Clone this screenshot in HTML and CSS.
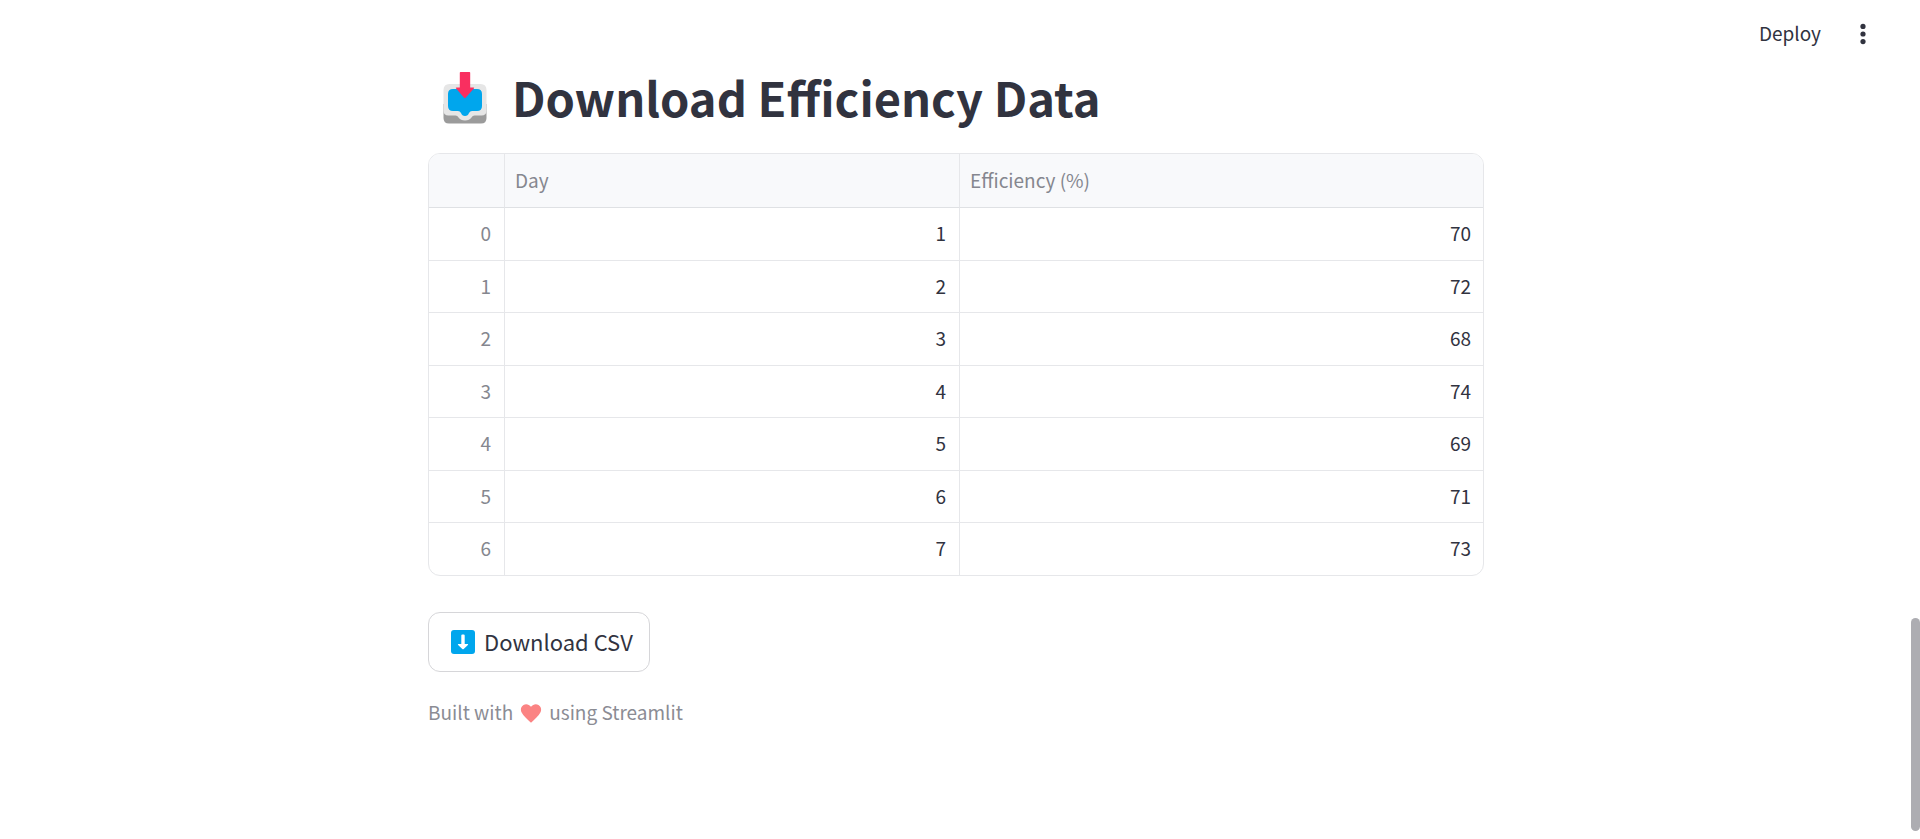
FILE: index.html
```html
<!DOCTYPE html>
<html lang="en">
<head>
<meta charset="utf-8">
<title>Download Efficiency Data</title>
<link rel="stylesheet" href="styles.css">
</head>
<body>
<header class="toolbar">
  <button class="deploy" type="button">Deploy</button>
  <button class="menu" type="button" aria-label="Main menu">
    <svg width="24" height="24" viewBox="0 0 24 24" aria-hidden="true"><circle cx="12" cy="4.400" r="2.600"/><circle cx="12" cy="12" r="2.600"/><circle cx="12" cy="19.600" r="2.600"/></svg>
  </button>
</header>
<main class="content">
  <h1 class="title">
    <svg class="inbox" width="44" height="52" viewBox="0 0 44 52" aria-hidden="true">
      <path fill="#9b9b9b" d="M.5 32h43v14q0 5.500-5.500 5.500H6q-5.500 0-5.500-5.500z"/>
      <path fill="#e6e6e6" d="M6.500 12h31q6 0 6 6v20.500q0 5-5 5h-7q-2 0-3 2-2 3-6.500 3t-6.500-3q-1-2-3-2h-7q-5 0-5-5V18q0-6 6-6z"/>
      <path fill="#00a6ed" d="M10 17h24q5 0 5 5v12q0 5-5 5h-5q-2 0-3 2-1 3-4 3t-4-3q-1-2-3-2h-5q-5 0-5-5V22q0-5 5-5z"/>
      <path fill="#f92f60" d="M17.500 0h9q.7 0 .7.700V15.500h3.200q1.300 0 .5 1L22.600 25.800q-.8.700-1.500 0L13.100 16.500q-.8-1 .5-1h3.200V.7q0-.7.7-.7z"/>
    </svg>
    <span>Download Efficiency Data</span>
  </h1>
  <div class="frame">
    <table class="grid">
      <colgroup><col class="col-index"><col class="col-day"><col></colgroup>
      <thead><tr><td></td><th scope="col">Day</th><th scope="col">Efficiency (%)</th></tr></thead>
      <tbody>
        <tr><th scope="row">0</th><td>1</td><td>70</td></tr>
        <tr><th scope="row">1</th><td>2</td><td>72</td></tr>
        <tr><th scope="row">2</th><td>3</td><td>68</td></tr>
        <tr><th scope="row">3</th><td>4</td><td>74</td></tr>
        <tr><th scope="row">4</th><td>5</td><td>69</td></tr>
        <tr><th scope="row">5</th><td>6</td><td>71</td></tr>
        <tr><th scope="row">6</th><td>7</td><td>73</td></tr>
      </tbody>
    </table>
  </div>
  <button class="download" type="button">
    <svg width="24" height="24" viewBox="0 0 24 24" aria-hidden="true"><rect width="24" height="24" rx="3" fill="#00a6ed"/><path fill="#fff" d="M10.300 5.500q0-1 1-1h1.400q1 0 1 1V14h2.800q1.200 0 .4 1l-4.200 4q-.7.700-1.400 0l-4.200-4q-.8-1 .4-1h2.800z"/></svg>
    <span>Download CSV</span>
  </button>
  <p class="caption">
    <span>Built with</span>
    <svg width="22" height="19" viewBox="0 0 22 19" role="img" aria-label="love"><path fill="#fb8383" d="M11 2.800C13 .2 16-.4 18.500 1c2.500 1.500 3.300 4.600 2 7.300C18.700 12 14.500 15.500 11.600 18.200q-.6.500-1.200 0C7.500 15.500 3.300 12 1.500 8.300.2 5.600 1 2.500 3.500 1 6-.4 9 .2 11 2.800z"/></svg>
    <span>using Streamlit</span>
  </p>
</main>
<div class="scroll-thumb"></div>
</body>
</html>
```
FILE: styles.css
```css
* { box-sizing: border-box; }

body {
  margin: 0;
  padding-right: 8px;
  background: #fff;
  color: #31333f;
  font-family: "Noto Sans CJK SC", "Open Sans", sans-serif;
  font-size: 19px;
  line-height: 28px;
}

button {
  font: inherit;
  color: inherit;
  background: none;
  border: 0;
  padding: 0;
  cursor: pointer;
}

.toolbar {
  display: flex;
  justify-content: flex-end;
  align-items: center;
  gap: 30px;
  height: 68px;
  padding-right: 37px;
}

.deploy { padding-bottom: 2px; }
.menu svg { display: block; fill: #31333f; }

.content {
  max-width: 1056px;
  margin: 0 auto;
}

.title {
  display: flex;
  align-items: center;
  gap: 25px;
  margin: 0;
  padding: 0 0 25px 15px;
  font-size: 47px;
  line-height: 56px;
  font-weight: 600;
}

.title svg { margin: 4px 0; }
.title span { padding-bottom: 2px; }

.frame {
  border: 1px solid #e6e7ea;
  border-radius: 12px;
  overflow: hidden;
}

.grid {
  width: 100%;
  table-layout: fixed;
  border-collapse: separate;
  border-spacing: 0;
}

.col-index { width: 76px; }
.col-day { width: 455px; }

.grid th,
.grid td {
  height: 53px;
  padding: 0 13px 2px;
  font-weight: 400;
  text-align: right;
  border-right: 1px solid #e6e7ea;
  border-bottom: 1px solid #e6e7ea;
}

.grid tbody tr:nth-child(even) > * { height: 52px; }
.grid tr > :last-child { border-right: 0; padding-right: 12px; }
.grid tbody tr:last-child > * { height: 52px; border-bottom: 0; }
.grid th { color: #85878f; }

.grid thead th,
.grid thead td {
  height: 54px;
  padding: 0 10px 2px;
  text-align: left;
  background: #f8f9fb;
  border-bottom-color: #dfe1e4;
}

.download {
  display: flex;
  align-items: center;
  gap: 9px;
  margin-top: 36px;
  padding: 14px 16px 14px 22px;
  border: 1px solid #d6d6d9;
  border-radius: 12px;
  font-size: 22px;
  line-height: 28px;
}

.download span { padding-bottom: 2px; }

.caption {
  display: flex;
  align-items: center;
  gap: 7px;
  margin: 26px 0 0;
  color: #8b8c94;
}

.caption span { padding-bottom: 2px; }

.scroll-thumb {
  position: fixed;
  right: 0;
  bottom: 8px;
  width: 9px;
  height: 213px;
  border-radius: 5px;
  background: #adadb2;
}
```
